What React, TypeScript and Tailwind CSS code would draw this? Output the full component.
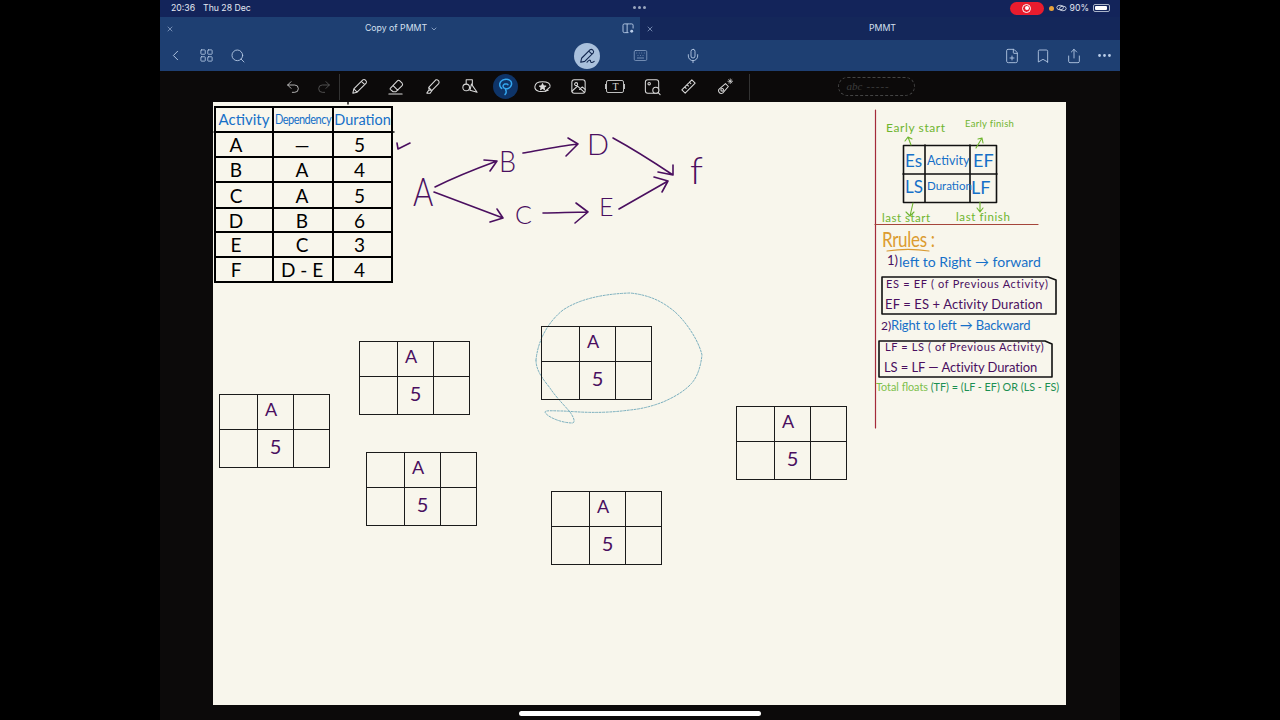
import {
  Bookmark,
  ChevronDown,
  ChevronLeft,
  Ellipsis,
  FilePlus,
  Keyboard,
  LayoutGrid,
  Mic,
  Redo2,
  Search,
  Share,
  Undo2,
  X,
} from "lucide-react";

const PURPLE = "text-[#4a0f5f]";
const BLUE = "text-[#1670c8]";
const GREEN = "text-[#6fb52f]";

const tableRows = [
  ["A", "—", "5"],
  ["B", "A", "4"],
  ["C", "A", "5"],
  ["D", "B", "6"],
  ["E", "C", "3"],
  ["F", "D - E", "4"],
];

const rowHeights = ["h-[25px]", "h-[25px]", "h-[26px]", "h-[24px]", "h-[25px]", "h-[25px]"];
const colInset = ["pr-[16px]", "pr-[2px]", "pr-[6px]"];

function ActivityTable() {
  return (
    <div className="absolute left-[1px] top-[4px] w-[179px] border-l-2 border-t-2 border-black">
      <div className="grid h-[25px] grid-cols-[58px_60px_59px] text-[#1670c8]">
        <div className="flex items-center justify-center border-b-2 border-r-2 border-black text-[15px]">Activity</div>
        <div className="flex items-center justify-center border-b-2 border-r-2 border-black">
          <span className="scale-y-125 text-[11px] tracking-[-0.5px]">Dependency</span>
        </div>
        <div className="flex items-center justify-center border-b-2 border-r-2 border-black text-[14.5px]">Duration</div>
      </div>
      {tableRows.map((row, i) => (
        <div key={row[0]} className={`grid grid-cols-[58px_60px_59px] text-[19px] text-black ${rowHeights[i]}`}>
          {row.map((cell, j) => (
            <div key={j} className={`flex items-center justify-center border-b-2 border-r-2 border-black leading-none ${colInset[j]}`}>
              {cell}
            </div>
          ))}
        </div>
      ))}
    </div>
  );
}

function NodeBox({ place }: { place: string }) {
  return (
    <div className={`absolute grid h-[74px] w-[111px] grid-cols-[38px_36px_35px] grid-rows-[35px_37px] border-[1.5px] border-[#1b1b1b] ${place}`}>
      <div className="border-b-[1.5px] border-r-[1.5px] border-[#1b1b1b]" />
      <div className="flex items-center justify-center border-b-[1.5px] border-r-[1.5px] border-[#1b1b1b] pb-[6px] pr-[9px] text-[18px] leading-none text-[#4a0f5f]">A</div>
      <div className="border-b-[1.5px] border-[#1b1b1b]" />
      <div className="border-r-[1.5px] border-[#1b1b1b]" />
      <div className="flex items-center justify-center border-r-[1.5px] border-[#1b1b1b] pb-[6px] text-[20px] leading-none text-[#4a0f5f]">5</div>
      <div />
    </div>
  );
}

function Note({ place, children }: { place: string; children: React.ReactNode }) {
  return <span className={`absolute whitespace-nowrap leading-none ${place}`}>{children}</span>;
}

// everything drawn by hand on the page, in screen coordinates
function Ink() {
  return (
    <svg viewBox="213 102 853 603" className="absolute inset-0 h-full w-full" fill="none" strokeLinecap="round" strokeLinejoin="round">
      <g stroke="#4a0f5f" strokeWidth="1.6">
        <path d="M435 187 C455 177 478 168 497 161 M484 160 L497 161 L490 171" />
        <path d="M523 153 C540 150 560 146 578 144 M568 138 L578 144 L566 156" />
        <path d="M613 138 C635 150 655 163 673 175 M673 165 L673 175 L658 172" />
        <path d="M434 192 C458 201 482 210 503 218 M497 209 L503 218 L490 222" />
        <path d="M543 213 C558 213 572 212 588 212 M576 203 L588 212 L575 223" />
        <path d="M619 209 C635 200 652 190 668 181 M654 177 L668 181 L662 192" />
        <path d="M397 143 L398 149 C402 147 406 145 410 143" />
      </g>
      <path d="M214 132 L394 132 M348 102 L348 104" stroke="#111" strokeWidth="1.5" />
      <path
        d="M536 360 C538 340 548 322 563 310 C578 300 600 294 630 293 C650 295 662 302 670 308 C682 316 698 338 702 355 C700 372 695 380 690 385 C682 393 672 398 663 402 C650 407 640 409 630 410 C600 414 580 412 563 411 C555 411 545 410 545 412 C546 416 560 423 573 423 C576 421 572 415 570 412 C564 405 555 396 550 388 C542 378 536 370 536 360 Z"
        stroke="#6ba6b8"
        strokeWidth="0.9"
        strokeDasharray="2 1.5"
      />
      <path d="M875.5 110 L875.5 428" stroke="#a52a3a" strokeWidth="1.2" />
      <path d="M875 224.5 L1038 224.5" stroke="#a5453a" strokeWidth="1.2" />
      <path d="M887 251 C900 249 916 249 929 251" stroke="#d99a32" strokeWidth="1.2" />
      <g stroke="#111" strokeWidth="1.6">
        <rect x="903.5" y="145.5" width="93" height="57" />
        <path d="M925 145 V202 M970 145 V202 M903 174 H997" />
        <path d="M882 277 H1048 L1056 280 V314 H882 Z" />
        <path d="M879 341 H1045 L1052 344 V377 H879 Z" />
      </g>
      <g stroke="#6fb52f" strokeWidth="1.1">
        <path d="M911 145 L908 137 M905 141 L908 137 L912 139" />
        <path d="M976 148 L982 138 M978 139 L982 138 L983 143" />
        <path d="M913 203 L910 216 M906 212 L910 216 L914 212" />
        <path d="M980 202 L980 212 M977 208 L980 212 L983 208" />
      </g>
    </svg>
  );
}

function Canvas() {
  return (
    <div className="relative h-[603px] w-[853px] overflow-hidden bg-[#f8f6ec] font-['Lato',sans-serif]">
      <Ink />
      <ActivityTable />

      <Note place={`left-[200px] top-[74px] scale-y-125 text-[31px] font-light ${PURPLE}`}>A</Note>
      <Note place={`left-[286px] top-[45px] scale-y-110 text-[27px] font-light ${PURPLE}`}>B</Note>
      <Note place={`left-[374px] top-[27px] text-[29px] font-light ${PURPLE}`}>D</Note>
      <Note place={`left-[302px] top-[100px] text-[25px] font-light ${PURPLE}`}>C</Note>
      <Note place={`left-[386px] top-[92px] text-[25px] font-light ${PURPLE}`}>E</Note>
      <Note place={`left-[477px] top-[48px] text-[38px] font-light ${PURPLE}`}>f</Note>

      <NodeBox place="left-[6px] top-[292px]" />
      <NodeBox place="left-[146px] top-[239px]" />
      <NodeBox place="left-[328px] top-[224px]" />
      <NodeBox place="left-[153px] top-[350px]" />
      <NodeBox place="left-[338px] top-[389px]" />
      <NodeBox place="left-[523px] top-[304px]" />

      <Note place={`left-[673px] top-[20px] text-[12px] tracking-[0.6px] ${GREEN}`}>Early start</Note>
      <Note place={`left-[752px] top-[17px] text-[9.5px] tracking-[0.3px] ${GREEN}`}>Early finish</Note>
      <Note place={`left-[692px] top-[50px] text-[17px] ${BLUE}`}>Es</Note>
      <Note place={`left-[714px] top-[53px] text-[12.5px] ${BLUE}`}>Activity</Note>
      <Note place={`left-[760px] top-[49px] text-[18px] ${BLUE}`}>EF</Note>
      <Note place={`left-[692px] top-[76px] text-[17px] ${BLUE}`}>LS</Note>
      <Note place={`left-[714px] top-[78px] text-[11.5px] ${BLUE}`}>Duration</Note>
      <Note place={`left-[758px] top-[76px] text-[18px] ${BLUE}`}>LF</Note>
      <Note place={`left-[669px] top-[110px] text-[11.5px] tracking-[0.5px] ${GREEN}`}>last start</Note>
      <Note place={`left-[743px] top-[109px] text-[11.5px] tracking-[0.6px] ${GREEN}`}>last finish</Note>

      <Note place="left-[669px] top-[128px] scale-y-125 text-[17px] tracking-[-0.3px] text-[#dc9c30]">Rrules :</Note>
      <Note place={`left-[674px] top-[152px] text-[13px] ${PURPLE}`}>1)</Note>
      <Note place={`left-[686px] top-[153px] text-[14px] ${BLUE}`}>left to Right → forward</Note>
      <Note place={`left-[673px] top-[176px] text-[11px] tracking-[0.68px] ${PURPLE}`}>ES = EF ( of Previous Activity)</Note>
      <Note place={`left-[672px] top-[196px] text-[13px] tracking-[0.12px] ${PURPLE}`}>EF = ES + Activity Duration</Note>
      <Note place={`left-[668px] top-[218px] text-[12px] ${PURPLE}`}>2)</Note>
      <Note place={`left-[678px] top-[217px] text-[13px] tracking-[-0.15px] ${BLUE}`}>Right to left → Backward</Note>
      <Note place={`left-[672px] top-[239px] text-[11px] tracking-[0.62px] ${PURPLE}`}>LF = LS ( of Previous Activity)</Note>
      <Note place={`left-[671px] top-[259px] text-[13px] tracking-[-0.08px] ${PURPLE}`}>LS = LF — Activity Duration</Note>
      <Note place="left-[663px] top-[280px] text-[10.8px] text-[#7cc04a]">
        Total floats <span className="text-[#1b8f52]">(TF) = (LF - EF) OR (LS - FS)</span>
      </Note>
    </div>
  );
}

function ToolSvg({ children }: { children: React.ReactNode }) {
  return (
    <svg viewBox="0 0 20 20" className="h-[19px] w-[19px]" fill="none" stroke="#d9d9d9" strokeWidth="1.1" strokeLinecap="round" strokeLinejoin="round">
      {children}
    </svg>
  );
}

const toolClass = "flex h-[31px] w-[36.6px] shrink-0 items-center justify-center";

function ToolsRow() {
  return (
    <div className="flex h-[31px] items-center bg-[#0c0a0a] pl-[117px]">
      <div className="flex h-[31px] w-[31px] items-center justify-center">
        <Undo2 size={16} strokeWidth={1.2} className="text-[#d9d9d9]" />
      </div>
      <div className="flex h-[31px] w-[31px] items-center justify-center">
        <Redo2 size={16} strokeWidth={1.2} className="text-[#5f5f5f]" />
      </div>
      <div className="mr-[1px] h-[26px] w-px bg-[#333]" />
      <div className={toolClass}>
        <ToolSvg>
          <path d="M3 17 L4 12.5 L13.5 3 Q15 2 16.5 3.5 Q18 5 17 6.5 L7.5 16 Z M12 4.5 L15.5 8 M4 12.5 L7.5 16" />
        </ToolSvg>
      </div>
      <div className={toolClass}>
        <ToolSvg>
          <path d="M4.5 12 L12 4 Q13 3 14.5 4 L17 6.5 Q18 8 17 9 L10.5 15.5 H7.5 L4.5 13 Q4 12.5 4.5 12 Z M7.5 9 L12.5 14 M3 18 H17" />
        </ToolSvg>
      </div>
      <div className={toolClass}>
        <ToolSvg>
          <path d="M6 11 L13.5 3 Q15 2.5 16.5 4 Q17.5 5.5 16.5 7 L9.5 14 L6.5 14 Z M6 11 L9.5 14.5 M6 14 L4 17 L7.5 17 L9 15" />
        </ToolSvg>
      </div>
      <div className={toolClass}>
        <ToolSvg>
          <circle cx="6.5" cy="11" r="3.5" />
          <path d="M6.5 7 V3 H13 V8.5 M12 7.5 L18 16 L10.5 14 Z" />
        </ToolSvg>
      </div>
      <div className={toolClass}>
        <div className="flex h-[25px] w-[25px] items-center justify-center rounded-full bg-[#0e3468]">
          <svg viewBox="0 0 20 20" className="h-[19px] w-[19px]" fill="none" stroke="#35a8f0" strokeWidth="1.6" strokeDasharray="1.6 0.8" strokeLinecap="round">
            <path d="M6 12 C2 9 4 3 10 2.5 C16 2 18 7 15 10.5 C13 13 8 13 7.5 10 C7 7.5 11 6.5 12.5 8" />
            <path d="M10 13 C11 15 11 17 9.5 18.5" />
          </svg>
        </div>
      </div>
      <div className={toolClass}>
        <ToolSvg>
          <path d="M16 14 Q11 16 6 15 Q1.5 13.5 2 10 Q2.5 5 10 5 Q18 5 18 9.5" />
          <path d="M10 7 L11 9.3 L13.5 9.5 L11.6 11 L12.2 13.3 L10 12 L8 13.3 L8.6 11 L6.8 9.5 L9 9.3 Z" fill="#d9d9d9" />
          <path d="M13 15 L18 10.5" />
        </ToolSvg>
      </div>
      <div className={toolClass}>
        <ToolSvg>
          <rect x="3" y="3" width="14" height="14" rx="2.5" />
          <circle cx="7.5" cy="7.5" r="1.6" />
          <path d="M3 15 L9 9.5 L16 16 M11 13 L14 10.5 L17 13" />
        </ToolSvg>
      </div>
      <div className={toolClass}>
        <div className="relative flex h-[13px] w-[18px] items-center justify-center rounded-[2px] border border-[#bdbdbd] font-['Liberation_Serif',serif] text-[10px] leading-none text-[#d9d9d9]">
          T
          <span className="absolute -left-[2px] top-[3px] h-[5px] w-[2px] bg-[#bdbdbd]" />
          <span className="absolute -right-[2px] top-[3px] h-[5px] w-[2px] bg-[#bdbdbd]" />
        </div>
      </div>
      <div className={toolClass}>
        <ToolSvg>
          <rect x="2.5" y="3" width="14" height="14" rx="2.5" />
          <circle cx="6.5" cy="7" r="1.3" />
          <circle cx="13.5" cy="14" r="3.2" fill="#0c0a0a" />
          <path d="M16 16.5 L18 18.5" />
        </ToolSvg>
      </div>
      <div className={toolClass}>
        <ToolSvg>
          <path d="M3 13.5 L13.5 3 L17 6.5 L6.5 17 Z M6 10.5 L7.5 12 M8.5 8 L10 9.5 M11 5.5 L12.5 7" />
        </ToolSvg>
      </div>
      <div className={toolClass}>
        <ToolSvg>
          <path d="M3 13 L10 7 L13 10 L7 17 Q5 18 3.5 16.5 Q2 15 3 13 Z" />
          <circle cx="6.5" cy="13.5" r="1.4" />
          <path d="M15 2 V7 M12.5 4.5 H17.5 M13.3 2.8 L16.7 6.2 M16.7 2.8 L13.3 6.2" strokeWidth="0.8" />
        </ToolSvg>
      </div>
      <div className="ml-[5px] h-[26px] w-px bg-[#333]" />
      <div className="ml-[88px] flex h-[19px] w-[77px] items-center gap-[4px] rounded-full border border-dashed border-[#444] pl-[8px] font-['Liberation_Serif',serif] text-[11px] italic leading-none text-[#3d3d3d]">
        abc
        <span className="tracking-[1px]">-----</span>
      </div>
    </div>
  );
}

const navIcon = "flex h-[31px] w-[31px] items-center justify-center text-[#b9cde8]";

function NavRow() {
  return (
    <div className="grid h-[31px] grid-cols-3 items-center bg-[#1e3f72]">
      <div className="flex">
        <div className={navIcon}>
          <ChevronLeft size={17} strokeWidth={1.3} />
        </div>
        <div className={navIcon}>
          <LayoutGrid size={15} strokeWidth={1.3} />
        </div>
        <div className={navIcon}>
          <Search size={16} strokeWidth={1.3} />
        </div>
      </div>
      <div className="flex items-center justify-center">
        <div className="flex w-[53px] justify-center">
          <div className="flex h-[26px] w-[26px] items-center justify-center rounded-full bg-[#a9c0dc]">
            <svg viewBox="0 0 20 20" className="h-[18px] w-[18px]" fill="none" stroke="#12264e" strokeWidth="1.2" strokeLinecap="round" strokeLinejoin="round">
              <path d="M3 17 L4 12.5 L13.5 3 Q15 2 16.5 3.5 Q18 5 17 6.5 L7.5 16 Z M12 4.5 L15.5 8" />
              <path d="M10 17 C12 14 14 14 14 16 C14 18 17 17 18 16" />
            </svg>
          </div>
        </div>
        <div className="flex w-[53px] justify-center text-[#8ea6c8]">
          <Keyboard size={15} strokeWidth={1.2} />
        </div>
        <div className="flex w-[53px] justify-center text-[#b9cde8]">
          <Mic size={16} strokeWidth={1.3} />
        </div>
      </div>
      <div className="flex justify-end">
        <div className={navIcon}>
          <FilePlus size={16} strokeWidth={1.3} />
        </div>
        <div className={navIcon}>
          <Bookmark size={16} strokeWidth={1.3} />
        </div>
        <div className={navIcon}>
          <Share size={16} strokeWidth={1.3} />
        </div>
        <div className={navIcon}>
          <Ellipsis size={17} strokeWidth={2} />
        </div>
      </div>
    </div>
  );
}

function Tabs() {
  return (
    <div className="grid h-[23px] grid-cols-2 text-[8.75px] text-[#d5e0f0]">
      <div className="relative flex items-center justify-center bg-[#1e3f72] pl-[3px]">
        <X size={8} className="absolute left-[6px] top-[8px] text-[#9fb4d4]" />
        <span className="mr-[3px]">Copy of PMMT</span>
        <ChevronDown size={8} className="text-[#b9cde8]" />
        <svg viewBox="0 0 14 12" className="absolute right-[5px] top-[6px] h-[11px] w-[13px]" fill="none" stroke="#b9cde8" strokeWidth="1">
          <path d="M8 1 H2.5 Q1 1 1 2.5 V9 Q1 10.5 2.5 10.5 H7 M5.5 1 V10.5 M8 1 H10.5 Q12 1 12 2.5 V6" />
          <circle cx="10.5" cy="9" r="1.6" fill="#b9cde8" stroke="none" />
        </svg>
      </div>
      <div className="relative flex items-center justify-center bg-[#14275a] pl-[5px]">
        <X size={8} className="absolute left-[6px] top-[8px] text-[#9fb4d4]" />
        <span>PMMT</span>
      </div>
    </div>
  );
}

function StatusBar() {
  return (
    <div className="relative flex h-[17px] items-center justify-between bg-[#13245a] pl-[11px] pr-[10px] text-[8.7px] text-[#e3e8f2]">
      <div className="flex gap-[8px]">
        <span>20:36</span>
        <span>Thu 28 Dec</span>
      </div>
      <div className="absolute left-[473px] top-[6px] flex gap-[2px]">
        <span className="h-[3px] w-[3px] rounded-full bg-[#9aa6bd]" />
        <span className="h-[3px] w-[3px] rounded-full bg-[#9aa6bd]" />
        <span className="h-[3px] w-[3px] rounded-full bg-[#9aa6bd]" />
      </div>
      <div className="flex items-center">
        <div className="flex h-[13px] w-[34px] items-center justify-center rounded-full bg-[#e81c2e]">
          <span className="flex h-[9px] w-[9px] items-center justify-center rounded-full border border-white">
            <span className="h-[4px] w-[4px] rounded-full bg-white" />
          </span>
        </div>
        <span className="ml-[5px] h-[5px] w-[5px] rounded-full bg-[#e8a23a]" />
        <svg viewBox="0 0 12 8" className="ml-[2px] h-[8px] w-[11px]" fill="none" stroke="#e3e8f2" strokeWidth="0.9">
          <ellipse cx="4.5" cy="3.5" rx="3.6" ry="2.5" />
          <ellipse cx="7.5" cy="4.5" rx="3.6" ry="2.5" />
        </svg>
        <span className="ml-[3px]">90%</span>
        <div className="ml-[4px] flex h-[8px] w-[17px] items-center rounded-[2px] border border-[#aab4c8] p-[1px]">
          <div className="h-full w-[90%] rounded-[1px] bg-white" />
        </div>
      </div>
    </div>
  );
}

export default function App() {
  return (
    <div className="flex h-[720px] w-[1280px] justify-center overflow-hidden bg-black font-['Inter',sans-serif]">
      <div className="relative flex h-[720px] w-[960px] flex-col bg-[#0c0a0a]">
        <StatusBar />
        <Tabs />
        <NavRow />
        <ToolsRow />
        <div className="flex flex-1 pl-[53px]">
          <Canvas />
        </div>
        <div className="absolute bottom-[4px] left-[359px] h-[5px] w-[242px] rounded-full bg-white" />
      </div>
    </div>
  );
}
